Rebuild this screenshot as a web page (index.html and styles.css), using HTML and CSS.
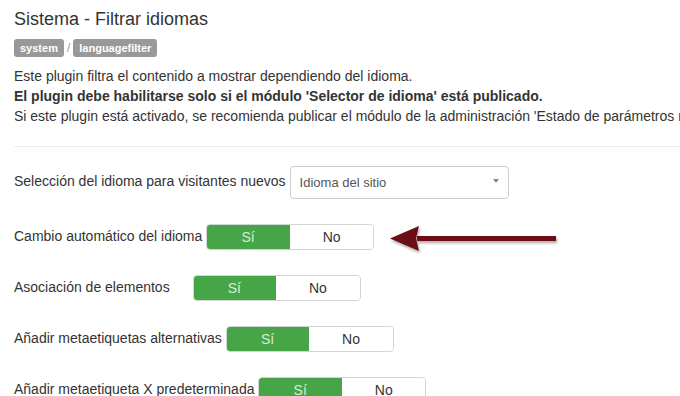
FILE: index.html
```html
<!DOCTYPE html>
<html lang="es">
<head>
    <meta charset="UTF-8">
    <meta name="viewport" content="width=device-width, initial-scale=1.0">
    <title>Sistema - Filtrar idiomas</title>
    <link rel="stylesheet" href="styles.css">
</head>
<body>

    <div class="page">
        <h2 class="title">Sistema - Filtrar idiomas</h2>

        <div class="tags">
            <span class="badge">system</span>
            <span class="sep">/</span>
            <span class="badge">languagefilter</span>
        </div>

        <div class="desc">
            <p>Este plugin filtra el contenido a mostrar dependiendo del idioma.</p>
            <p class="strong">El plugin debe habilitarse solo si el módulo 'Selector de idioma' está publicado.</p>
            <p>Si este plugin está activado, se recomienda publicar el módulo de la administración 'Estado de parámetros multilingües'.</p>
        </div>

        <hr class="divider">

        <div class="options">
            <div class="row">
                <label class="row-label">Selección del idioma para visitantes nuevos</label>
                <div class="select">
                    <span>Idioma del sitio</span>
                    <span class="caret"></span>
                </div>
            </div>

            <div class="row">
                <label class="row-label">Cambio automático del idioma</label>
                <div class="yesno">
                    <span class="yes">Sí</span>
                    <span class="no">No</span>
                </div>
            </div>

            <div class="row">
                <label class="row-label row-label-wide">Asociación de elementos</label>
                <div class="yesno">
                    <span class="yes">Sí</span>
                    <span class="no">No</span>
                </div>
            </div>

            <div class="row">
                <label class="row-label">Añadir metaetiquetas alternativas</label>
                <div class="yesno">
                    <span class="yes">Sí</span>
                    <span class="no">No</span>
                </div>
            </div>

            <div class="row">
                <label class="row-label">Añadir metaetiqueta X predeterminada</label>
                <div class="yesno">
                    <span class="yes">Sí</span>
                    <span class="no">No</span>
                </div>
            </div>
        </div>

        <!-- flecha de anotación -->
        <svg class="arrow" width="172" height="30" viewBox="0 0 172 30">
            <defs>
                <filter id="shadow" x="-10%" y="-50%" width="120%" height="200%">
                    <feDropShadow dx="1" dy="2" stdDeviation="1.5" flood-color="#000" flood-opacity="0.35"/>
                </filter>
            </defs>
            <g filter="url(#shadow)">
                <rect x="28" y="12" width="139" height="5" fill="#6d0d12"/>
                <path d="M1 14.5 L30 2 L27 14.5 L30 27 Z" fill="#6d0d12"/>
            </g>
        </svg>
    </div>

</body>
</html>
```

FILE: styles.css
```css
html, body {
    margin: 0;
    width: 680px;
    height: 396px;
    overflow: hidden;
    background: #ffffff;
}

body {
    font-family: 'Liberation Sans', Arial, sans-serif;
    font-size: 14px;
    color: #333333;
}

.page {
    position: relative;
    padding: 8px 0 0 14px;
}

.title {
    margin: 0;
    font-size: 18px;
    font-weight: normal;
    line-height: 22px;
    color: #333333;
}

.tags {
    display: flex;
    align-items: center;
    margin-top: 9px;
}

.badge {
    display: inline-block;
    padding: 2px 6px;
    font-size: 11px;
    font-weight: bold;
    line-height: 14px;
    color: #ffffff;
    background-color: #999999;
    border-radius: 3px;
}

.sep {
    margin: 0 3px;
    color: #999999;
    font-size: 12px;
}

.desc {
    margin-top: 9px;
}

.desc p {
    margin: 0;
    line-height: 20px;
    white-space: nowrap;
}

.desc .strong {
    font-weight: bold;
}

.divider {
    margin: 20px 0 0 0;
    border: 0;
    border-top: 1px solid #eeeeee;
    height: 0;
}

.options {
    margin-top: 19px;
}

.row {
    display: flex;
    align-items: center;
    margin-bottom: 25px;
}

.row-label {
    margin-right: 4px;
    padding-bottom: 3px;
}

.row-label-wide {
    margin-right: 23px;
}

/* lista desplegable */
.select {
    display: flex;
    align-items: center;
    justify-content: space-between;
    box-sizing: border-box;
    width: 219px;
    height: 33px;
    padding: 0 9px 0 9px;
    border: 1px solid #cccccc;
    border-radius: 4px;
    color: #555555;
    font-size: 13px;
}

.caret {
    width: 0;
    height: 0;
    border-left: 3.5px solid transparent;
    border-right: 3.5px solid transparent;
    border-top: 4px solid #888888;
    margin-top: -4px;
}

/* botones Sí / No */
.yesno {
    display: flex;
    box-sizing: border-box;
    width: 168px;
    height: 26px;
    border: 1px solid #d4d4d4;
    border-radius: 4px;
    overflow: hidden;
    font-size: 14px;
}

.yesno span {
    flex: 1;
    display: flex;
    align-items: center;
    justify-content: center;
}

.yes {
    background-color: #46a546;
    color: #d8eed4;
    margin: -1px 0 -1px -1px;
}

.no {
    background-color: #ffffff;
    color: #333333;
}

.arrow {
    position: absolute;
    left: 389px;
    top: 224px;
}
```
